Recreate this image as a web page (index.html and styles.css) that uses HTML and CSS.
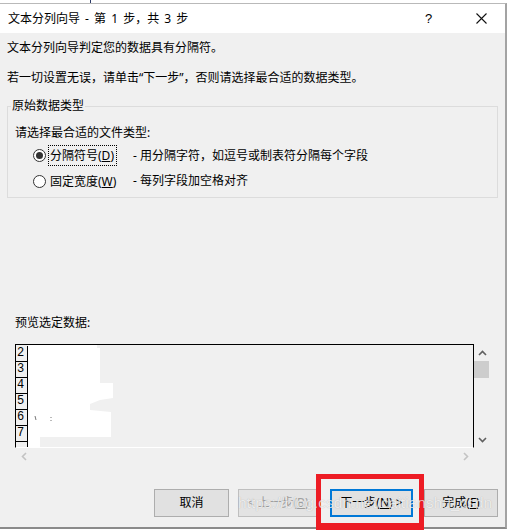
FILE: index.html
```html
<!DOCTYPE html>
<html>
<head>
<meta charset="utf-8">
<title>文本分列向导</title>
<link rel="stylesheet" href="styles.css">
</head>
<body>
<div class="screen">
  <div class="strip"><span class="mark"></span></div>
  <div class="window">
    <div class="titlebar">
      <span class="title">文本分列向导 - 第 1 步，共 3 步</span>
      <span class="help">?</span>
      <span class="close"><svg width="11" height="11" viewBox="0 0 11 11"><path d="M0.5 0.5L10.5 10.5M10.5 0.5L0.5 10.5" stroke="#111" stroke-width="1.1" fill="none"/></svg></span>
    </div>
    <div class="content">
      <p class="line l1">文本分列向导判定您的数据具有分隔符。</p>
      <p class="line l2">若一切设置无误，请单击“下一步”，否则请选择最合适的数据类型。</p>
      <fieldset class="group">
        <legend class="legend">原始数据类型</legend>
        <p class="prompt">请选择最合适的文件类型:</p>
        <div class="opts">
          <span class="radio checked"></span>
          <span class="lab focus">分隔符号(<u>D</u>)</span>
          <span class="desc">- 用分隔字符，如逗号或制表符分隔每个字段</span>
          <span class="radio"></span>
          <span class="lab">固定宽度(<u>W</u>)</span>
          <span class="desc">- 每列字段加空格对齐</span>
        </div>
      </fieldset>
      <p class="line pv-label">预览选定数据:</p>
      <div class="preview">
        <div class="pv-top">
          <div class="pv-box">
            <div class="rows">
              <div class="row"><span class="num">2</span></div>
              <div class="row"><span class="num">3</span></div>
              <div class="row"><span class="num">4</span></div>
              <div class="row"><span class="num">5</span></div>
              <div class="row"><span class="num">6</span></div>
              <div class="row"><span class="num">7</span></div>
              <div class="row"><span class="num"></span></div>
            </div>
            <svg class="blob" width="100" height="105" viewBox="0 0 100 105"><polygon points="13,0 82,0 82,4 85,4 85,39 98,39 98,54 85,56 75,60 75,66 96,68 96,93 25,93 25,104 13,104" fill="#ffffff"/><path d="M20 72 L21 76 M36 73 L36 74 M36 76 L36 77" stroke="#777" stroke-width="1"/></svg>
          </div>
          <div class="vscroll">
            <div class="sbtn"><svg width="9" height="6" viewBox="0 0 9 6"><polyline points="1,5 4.5,1.5 8,5" fill="none" stroke="#606060" stroke-width="1.6"/></svg></div>
            <div class="thumb"></div>
            <div class="track"></div>
            <div class="sbtn"><svg width="9" height="6" viewBox="0 0 9 6"><polyline points="1,1 4.5,4.5 8,1" fill="none" stroke="#606060" stroke-width="1.6"/></svg></div>
          </div>
        </div>
        <div class="hscroll">
          <div class="sbtn"><svg width="6" height="9" viewBox="0 0 6 9"><polyline points="5,1 1.5,4.5 5,8" fill="none" stroke="#c3c3c3" stroke-width="1.6"/></svg></div>
          <div class="track"></div>
          <div class="sbtn"><svg width="6" height="9" viewBox="0 0 6 9"><polyline points="1,1 4.5,4.5 1,8" fill="none" stroke="#c3c3c3" stroke-width="1.6"/></svg></div>
        </div>
      </div>
      <div class="buttons">
        <button class="btn b-cancel">取消</button>
        <button class="btn b-prev">&lt; 上一步(<u>B</u>)</button>
        <button class="btn b-next">下一步(<u>N</u>) &gt;</button>
        <button class="btn b-finish">完成(<u>F</u>)</button>
      </div>
    </div>
  </div>
  <div class="redbox"></div>
  <div class="watermark">https://blog.csdn.net/caitianshu_csdn</div>
</div>
</body>
</html>
```

FILE: styles.css
```css
* { box-sizing: border-box; }
html, body { margin: 0; padding: 0; background: #fff; }
body {
  font-family: "Noto Sans", "Noto Sans CJK SC", "Microsoft YaHei", sans-serif;
  font-size: 12px;
  color: #000;
}
.screen {
  position: relative;
  width: 508px;
  height: 530px;
  overflow: hidden;
  background: #fff;
}
.strip { height: 3px; display: flex; }
.mark { display: block; width: 1px; height: 3px; margin-left: 90px; background: #2b3a67; }
.window {
  width: 507px;
  border-top: 1px solid #b9b9b9;
  border-right: 2px solid #a3a3a3;
  border-bottom: 2px solid #8a8a8a;
}
.titlebar {
  height: 29px;
  background: #fff;
  display: flex;
  align-items: center;
  padding-left: 8px;
}
.title { flex: 1; line-height: 16px; font-size: 12px; word-spacing: 2px; white-space: nowrap; }
.help { width: 12px; margin-right: 39px; font-family: "Liberation Sans", sans-serif; font-size: 13px; line-height: 16px; }
.close { width: 11px; height: 11px; margin-right: 18px; display: flex; }
.content {
  height: 494px;
  background: #f0f0f0;
  padding-top: 7px;
}
.line { margin: 0; line-height: 16px; padding-left: 7px; white-space: nowrap; }
.l2 { margin-top: 14px; }
.group {
  margin: 12px 0 0 7px;
  width: 491px;
  padding: 0 0 6px 0;
  border: 1px solid #dcdcdc;
  min-width: 0;
}
.legend { margin-left: 3px; padding: 0 1px; line-height: 16px; }
.prompt { margin: 11px 0 0 7px; line-height: 16px; }
.opts {
  display: grid;
  grid-template-columns: 13px 83px auto;
  grid-template-rows: 21px 20px;
  row-gap: 5px;
  column-gap: 2px;
  margin: 4px 0 0 25px;
  align-items: center;
}
.radio {
  width: 13px;
  height: 13px;
  border: 1px solid #333;
  border-radius: 50%;
  background: #fff;
  display: flex;
  align-items: center;
  justify-content: center;
}
.radio.checked::after {
  content: "";
  width: 7px;
  height: 7px;
  border-radius: 50%;
  background: #333;
}
.lab { justify-self: start; line-height: 19px; padding: 0 2px 0 1px; border: 1px solid transparent; white-space: nowrap; }
.lab.focus { border: 1px dotted #000; }
.desc { white-space: nowrap; line-height: 16px; }
u { text-decoration: underline; text-underline-offset: 1px; }
.pv-label { margin-top: 117px; padding-left: 15px; }
.preview { margin: 13px 0 0 15px; width: 476px; }
.pv-top { display: flex; height: 104px; }
.pv-box {
  position: relative;
  width: 459px;
  height: 104px;
  border: 1px solid #000;
  border-bottom-color: #fff;
  padding-top: 1px;
  overflow: hidden;
  background: #f0f0f0;
}
.rows { display: flex; flex-direction: column; }
.row { height: 16px; display: flex; flex: none; }
.num {
  width: 12px;
  height: 16px;
  border-right: 1px solid #000;
  border-bottom: 1px solid #000;
  font-family: "Liberation Mono", "DejaVu Sans Mono", monospace;
  font-size: 12px;
  line-height: 15px;
  padding-left: 1px;
}
.blob { position: absolute; left: -1px; top: -1px; }
.vscroll { width: 17px; display: flex; flex-direction: column; }
.sbtn { width: 17px; height: 17px; display: flex; align-items: center; justify-content: center; flex: none; }
.thumb { width: 15px; height: 17px; background: #cdcdcd; flex: none; }
.vscroll .track { flex: 1; }
.hscroll { display: flex; width: 459px; height: 17px; }
.hscroll .track { flex: 1; }
.buttons {
  display: flex;
  margin-top: 24px;
  padding-left: 154px;
  height: 28px;
}
.btn {
  height: 28px;
  border: 1px solid #adadad;
  background: #e1e1e1;
  font-family: "Noto Sans", "Noto Sans CJK SC", "Microsoft YaHei", sans-serif;
  font-size: 12px;
  color: #000;
  padding: 0;
  line-height: 16px;
  white-space: nowrap;
}
.b-cancel { width: 75px; }
.b-prev { width: 80px; margin-left: 9px; color: #a0a0a0; border-color: #bfbfbf; background: #e3e3e3; }
.b-next { width: 83px; margin-left: 12px; border: 2px solid #0078d7; }
.b-finish { width: 74px; margin-left: 11px; }
.redbox {
  position: absolute;
  left: 316px;
  top: 474px;
  width: 108px;
  height: 56px;
  border: 5px solid #ed1c24;
  border-bottom-width: 7px;
}
.watermark {
  position: absolute;
  left: 238px;
  top: 494px;
  font-family: "Liberation Sans", Arial, sans-serif;
  font-size: 15.5px;
  line-height: 18px;
  color: rgba(255, 255, 255, 0.75);
  text-shadow: 0 0 1px rgba(0, 0, 0, 0.25);
  white-space: nowrap;
}
```
